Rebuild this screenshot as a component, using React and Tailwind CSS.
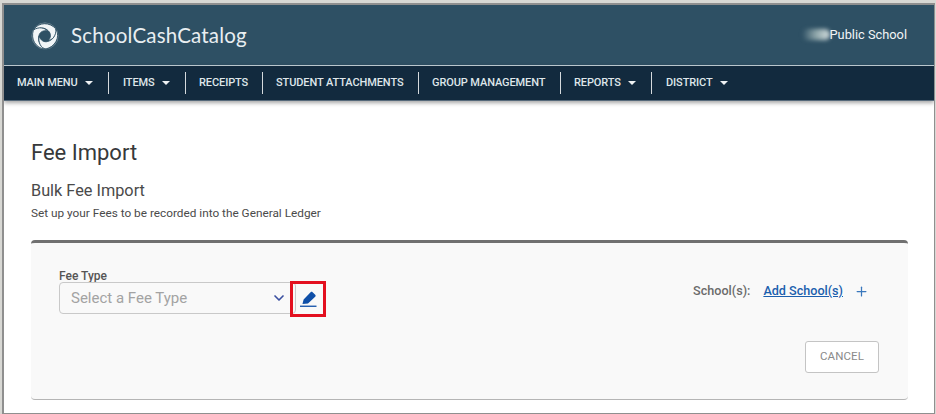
import { ChevronDown, Plus } from 'lucide-react';

const navItems = [
  { label: 'MAIN MENU', caret: true, width: 'w-[105px]', pad: 'pl-[13px]' },
  { label: 'ITEMS', caret: true, width: 'w-[77px]', pad: 'pl-[14px]' },
  { label: 'RECEIPTS', width: 'w-[77px]', pad: 'pl-[13px]' },
  { label: 'STUDENT ATTACHMENTS', width: 'w-[156px]', pad: 'pl-[13px]' },
  { label: 'GROUP MANAGEMENT', width: 'w-[142px]', pad: 'pl-[13px]' },
  { label: 'REPORTS', caret: true, width: 'w-[91px]', pad: 'pl-[13px]' },
  { label: 'DISTRICT', caret: true, width: 'w-[92px]', pad: 'pl-[14px]', last: true },
];

const blade = 'M2.5 9C-0.5 18 5 28.5 15.5 29C9.5 25.5 7 20 8.5 14.5C9.5 10.5 13.5 8.5 18 9.5C13 5 5.5 4.5 2.5 9Z';

const Logo = () => (
  <svg width="28" height="28" viewBox="0 0 30 30" fill="#f1f5f7" stroke="#2e5064" strokeWidth="0.9" className="overflow-visible">
    <circle cx="15" cy="15" r="14" fill="none" stroke="#f1f5f7" strokeWidth="0.6" opacity="0.6" />
    <path d={blade} />
    <path d={blade} transform="rotate(120 15 15)" />
    <path d={blade} transform="rotate(240 15 15)" />
  </svg>
);

const PencilIcon = () => (
  <svg width="17" height="18" viewBox="0 0 17 18" fill="#0f4fa8">
    <path d="M2.5 14L3.6 9.6L10.6 2.2C11.2 1.6 12 1.6 12.6 2.2L15.2 4.8C15.8 5.4 15.8 6.2 15.2 6.8L8 13.6Z" />
    <rect x="0" y="15.6" width="16.5" height="1.3" />
  </svg>
);

export default function App() {
  return (
    <div className="h-[414px] w-[936px] overflow-hidden bg-[#d8d8d4] pt-[3px] font-['Roboto',sans-serif]">
      <div className="ml-[2px] mr-[1px] h-[411px] overflow-hidden border-2 border-[#8f8f8f] border-r-[1px] border-b-[1px] bg-white">
        <header className="flex h-[60px] items-center justify-between border-b-[1px] border-[#2e5064] bg-[#2e5064] pl-[27px] pr-[27px]">
          <div className="flex items-center gap-[12px] pt-[2px]">
            <Logo />
            <span className="font-['Lato',sans-serif] text-[20.5px] leading-none tracking-[0.2px] text-[#e9eef1]">SchoolCashCatalog</span>
          </div>
          <div className="flex items-center">
            <span className="h-[11px] w-[28px] rounded-full bg-gradient-to-r from-transparent via-[#8fa6aa] to-[#d4dedf] blur-[2px]" />
            <span className="text-[12.8px] text-[#f2f5f7]">Public School</span>
          </div>
        </header>
        <nav className="flex h-[36px] items-center border-t-[1px] border-b-[1px] border-t-[#b9c6cd] border-b-[#56697a] bg-[#122a3e] shadow-[0_2px_4px_rgba(0,0,0,0.35)]">
          {navItems.map((item) => (
            <div
              key={item.label}
              className={`flex h-[22px] shrink-0 items-center ${item.pad} ${item.width} ${item.last ? '' : 'border-r border-[#d5dadd]'}`}
            >
              <span className="text-[11px] font-medium tracking-[-0.1px] text-[#dfe6ea]">{item.label}</span>
              {item.caret && (
                <span className="ml-[7px] h-0 w-0 border-x-[4px] border-t-[4px] border-x-transparent border-t-[#eef1f3]" />
              )}
            </div>
          ))}
        </nav>
        <main className="pl-[27px] pr-[26px] pt-[39px]">
          <h1 className="text-[22px] leading-[26px] text-[#37393b]">Fee Import</h1>
          <h2 className="mt-[15px] text-[16.3px] leading-[20px] text-[#4a4a4a]">Bulk Fee Import</h2>
          <p className="mt-[5px] text-[11.8px] leading-[14px] text-[#4a4a4a]">Set up your Fees to be recorded into the General Ledger</p>
          <section className="mt-[20px] h-[160px] rounded-[4px] border-t-[3px] border-b-[1px] border-t-[#707070] border-b-[#b5b5b5] bg-[#f9f9f9] pl-[28px] pr-[29px] pt-[28px]">
            <div className="flex items-start justify-between">
              <div>
                <div className="text-[12px] font-medium leading-[11px] text-[#555]">Fee Type</div>
                <div className="flex items-start">
                  <div className="flex h-[32px] w-[237px] items-center justify-between rounded-[4px] border border-[#c9c9c9] pl-[11px] pr-[8px]">
                    <span className="text-[15px] text-[#a3a3a3]">Select a Fee Type</span>
                    <ChevronDown size={16} strokeWidth={2.5} className="text-[#3a4fa0]" />
                  </div>
                  <div className="relative -ml-[6px] -mt-[1px] flex h-[36px] w-[36px] items-center justify-center border-[3px] border-[#e3101f]">
                    <PencilIcon />
                  </div>
                </div>
              </div>
              <div className="mr-[10px] mt-[11px] flex items-center text-[12.6px]">
                <span className="font-medium text-[#6b6b6b]">School(s):</span>
                <a className="ml-[13px] font-medium text-[#1b5fae] underline">Add School(s)</a>
                <Plus size={15} strokeWidth={2} color="#3a78bd" className="ml-[11px]" />
              </div>
            </div>
            <div className="mt-[24px] flex justify-end">
              <button className="h-[32px] w-[74px] rounded-[3px] border border-[#c4c4c4] bg-white text-[11.5px] tracking-[0.1px] text-[#8a8a8a]">CANCEL</button>
            </div>
          </section>
        </main>
      </div>
    </div>
  );
}
